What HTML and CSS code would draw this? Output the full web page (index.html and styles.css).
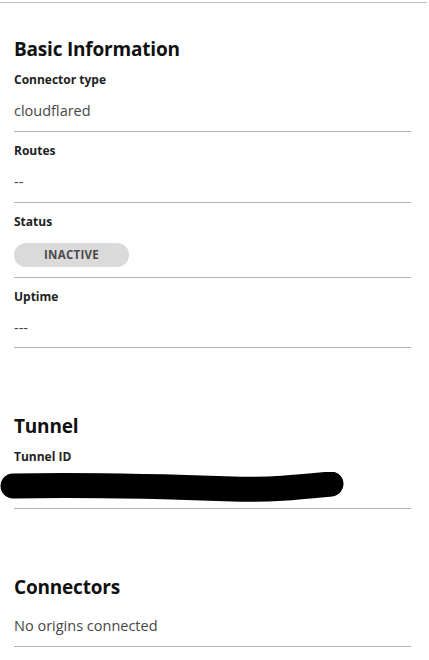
FILE: index.html
```html
<!DOCTYPE html>
<html lang="en">
<head>
<meta charset="utf-8">
<title>Tunnel details</title>
<link rel="stylesheet" href="styles.css">
</head>
<body>
<div class="page">
  <section class="section">
    <h2 class="section-title">Basic Information</h2>
    <div class="row">
      <div class="label">Connector type</div>
      <div class="value">cloudflared</div>
    </div>
    <div class="row">
      <div class="label">Routes</div>
      <div class="value">--</div>
    </div>
    <div class="row">
      <div class="label">Status</div>
      <div class="value"><span class="badge">INACTIVE</span></div>
    </div>
    <div class="row">
      <div class="label">Uptime</div>
      <div class="value">---</div>
    </div>
  </section>

  <section class="section">
    <h2 class="section-title">Tunnel</h2>
    <div class="row row-redacted">
      <div class="label">Tunnel ID</div>
      <div class="redacted">
        <svg class="scribble" width="350" height="32" viewBox="0 0 350 32" aria-hidden="true">
          <path d="M13 14 C 60 13, 150 14, 233 17 C 272 18, 300 15, 331 12" fill="none" stroke="#000" stroke-width="25" stroke-linecap="round"/>
        </svg>
      </div>
    </div>
  </section>

  <section class="section">
    <h2 class="section-title">Connectors</h2>
    <div class="row row-plain">
      <div class="value">No origins connected</div>
    </div>
  </section>
</div>
</body>
</html>
```

FILE: styles.css
```css
html, body {
  margin: 0;
  padding: 0;
  background: #ffffff;
}

body {
  font-family: "Open Sans", "Noto Sans", "Liberation Sans", sans-serif;
  color: #1b1b1b;
}

.page {
  border-top: 1px solid #bdbdbd;
  margin-top: 2px;
  width: 427px;
  box-sizing: border-box;
  padding: 0 16px 0 14px;
}

.section {
  padding-top: 32px;
}

.section + .section {
  padding-top: 64px;
}

.section-title {
  margin: 0;
  font-size: 19px;
  line-height: 28px;
  font-weight: 700;
  color: #111;
  letter-spacing: -0.2px;
}

.row {
  padding: 10px 0 10px;
  border-bottom: 1px solid #b3b3b3;
}

.section-title + .row {
  padding-top: 8px;
}

.row:last-child {
  padding-bottom: 9px;
}

.label {
  font-size: 12px;
  line-height: 18px;
  font-weight: 700;
  color: #222;
}

.value {
  margin-top: 12px;
  font-size: 14.5px;
  line-height: 20px;
  color: #474747;
}

.badge {
  display: inline-flex;
  align-items: center;
  justify-content: center;
  width: 115px;
  height: 24px;
  border-radius: 12px;
  background: #dadada;
  color: #4a4a4a;
  font-size: 11.5px;
  font-weight: 700;
  letter-spacing: 0.3px;
  vertical-align: top;
}

.row.row-redacted {
  padding-bottom: 4px;
}

.redacted {
  margin-top: 6px;
  margin-left: -14px;
  height: 32px;
}

.scribble {
  display: block;
}

.row.row-plain {
  padding-top: 15px;
  padding-bottom: 10px;
}

.row-plain .value {
  margin-top: 0;
}
```
